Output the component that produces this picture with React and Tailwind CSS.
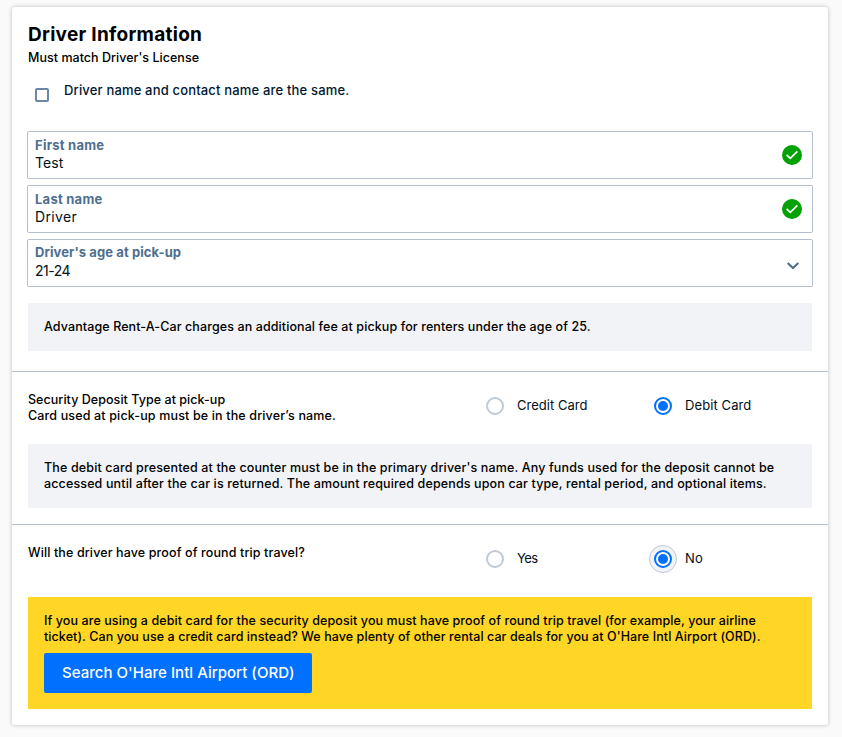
function Check() {
  return (
    <svg width="20" height="20" viewBox="0 0 20 20" className="shrink-0">
      <circle cx="10" cy="10" r="10" fill="#04a104" />
      <path d="M4.6 9.8 8.3 13.4 15.4 6.4" fill="none" stroke="#fff" strokeWidth="1.7" />
    </svg>
  );
}

function Chevron() {
  return (
    <svg width="14" height="10" viewBox="0 0 14 10" className="mt-[5px] mr-[2px] shrink-0">
      <path d="M1.7 1.9 7 7.1 12.3 1.9" fill="none" stroke="#4f6f8f" strokeWidth="2.1" />
    </svg>
  );
}

function Field({ label, labelClass, value, valueClass, children }) {
  return (
    <div className="flex h-12 items-center justify-between rounded-[2px] border border-[#b4bfcd] pr-[10px] pl-[7px]">
      <div className="pb-[2px] whitespace-nowrap">
        <div className={`text-[13px] font-bold text-[#4f6f8f] ${labelClass}`}>{label}</div>
        <div className={`text-[14px] leading-[18px] font-normal text-[#001020] ${valueClass}`}>{value}</div>
      </div>
      {children}
    </div>
  );
}

function Radio({ label, labelClass, className, checked, focused }) {
  return (
    <div className={`flex shrink-0 items-center ${className ?? ""}`}>
      <span
        className={`-ml-[5px] flex size-7 shrink-0 items-center justify-center rounded-full border ${
          focused ? "border-[#c0c8d4] bg-[#f2f3f7]" : "border-transparent"
        }`}
      >
        <span
          className={`flex size-[18px] items-center justify-center rounded-full border-2 bg-white ${
            checked ? "border-[#0070ff]" : "border-[#c0cad5]"
          }`}
        >
          {checked && <span className="size-[10px] rounded-full bg-[#0070ff]" />}
        </span>
      </span>
      <span className={`mb-[2px] ml-2 text-[13px] leading-4 font-normal whitespace-nowrap text-[#001020] ${labelClass}`}>
        {label}
      </span>
    </div>
  );
}

function Line({ className, children }) {
  return <div className={`whitespace-nowrap ${className}`}>{children}</div>;
}

export default function App() {
  return (
    <div className="h-[737px] bg-[#fafafa] px-3 pt-[7px] font-['Inter',sans-serif] text-[12.5px] leading-4 font-medium text-black">
      <div className="h-[718px] w-[816px] rounded-[3px] bg-white shadow-[0_0_4px_rgba(0,0,0,0.25)]">
        <section className="h-[365px] border-b border-[#b4c0cc] px-4 pt-4">
          <h1 className="text-[19px] leading-6 font-bold tracking-[0.28px]">Driver Information</h1>
          <Line className="mt-[3px] tracking-[0.03px]">Must match Driver's License</Line>
          <div className="mt-4 flex h-[42px] pl-[7px]">
            <span className="mt-[6px] size-[14px] rounded-[2px] border-2 border-[#6b86a6]" />
            <Line className="ml-[15px] text-[13px] tracking-[0.17px] text-[#001833]">
              Driver name and contact name are the same.
            </Line>
          </div>
          <div className="-mx-px mt-[7px] flex flex-col gap-[6px]">
            <Field label="First name" value="Test" labelClass="leading-[17px] tracking-[0.25px]" valueClass="tracking-[0.1px]">
              <Check />
            </Field>
            <Field label="Last name" value="Driver" labelClass="leading-[17px] tracking-[0.25px]" valueClass="tracking-[0.35px]">
              <Check />
            </Field>
            <Field
              label="Driver's age at pick-up"
              value="21-24"
              labelClass="-mt-px pb-px leading-[17px] tracking-[0.09px]"
              valueClass="tracking-[-0.5px]"
            >
              <Chevron />
            </Field>
          </div>
          <div className="mt-4 bg-[#f2f3f7] p-4">
            <Line className="tracking-[0.1px]">
              Advantage Rent-A-Car charges an additional fee at pickup for renters under the age of 25.
            </Line>
          </div>
        </section>

        <section className="h-[153px] border-b border-[#b4c0cc] px-4">
          <div className="flex h-[72px] pt-5">
            <div className="w-[458px] shrink-0">
              <Line className="tracking-[0.05px]">Security Deposit Type at pick-up</Line>
              <Line className="tracking-[0.15px]">Card used at pick-up must be in the driver’s name.</Line>
            </div>
            <div className="flex h-7">
              <Radio label="Credit Card" labelClass="tracking-[0.02px]" className="w-[168px]" />
              <Radio label="Debit Card" labelClass="tracking-[0.1px]" checked />
            </div>
          </div>
          <div className="bg-[#f2f3f7] p-4">
            <Line className="tracking-[0.14px]">
              The debit card presented at the counter must be in the primary driver's name. Any funds used for the deposit cannot be
            </Line>
            <Line className="tracking-[0.133px]">
              accessed until after the car is returned. The amount required depends upon car type, rental period, and optional items.
            </Line>
          </div>
        </section>

        <section className="px-4">
          <div className="flex h-[72px] pt-5">
            <Line className="w-[458px] shrink-0 tracking-[0.125px]">Will the driver have proof of round trip travel?</Line>
            <div className="flex h-7">
              <Radio label="Yes" labelClass="tracking-[-0.6px]" className="w-[168px]" />
              <Radio label="No" labelClass="tracking-[0.1px]" checked focused />
            </div>
          </div>
          <div className="h-28 bg-[#ffd626] p-4">
            <Line className="tracking-[0.095px]">
              If you are using a debit card for the security deposit you must have proof of round trip travel (for example, your airline
            </Line>
            <Line className="tracking-[0.08px]">
              ticket). Can you use a credit card instead? We have plenty of other rental car deals for you at O'Hare Intl Airport (ORD).
            </Line>
            <button className="mt-2 flex h-10 w-[268px] items-center rounded-[2px] bg-[#0070ff] pl-[18px] text-[15px] font-medium whitespace-nowrap text-white">
              <span className="tracking-[0.03px]">Search O'Hare Intl Airport (ORD)</span>
            </button>
          </div>
        </section>
      </div>
    </div>
  );
}
